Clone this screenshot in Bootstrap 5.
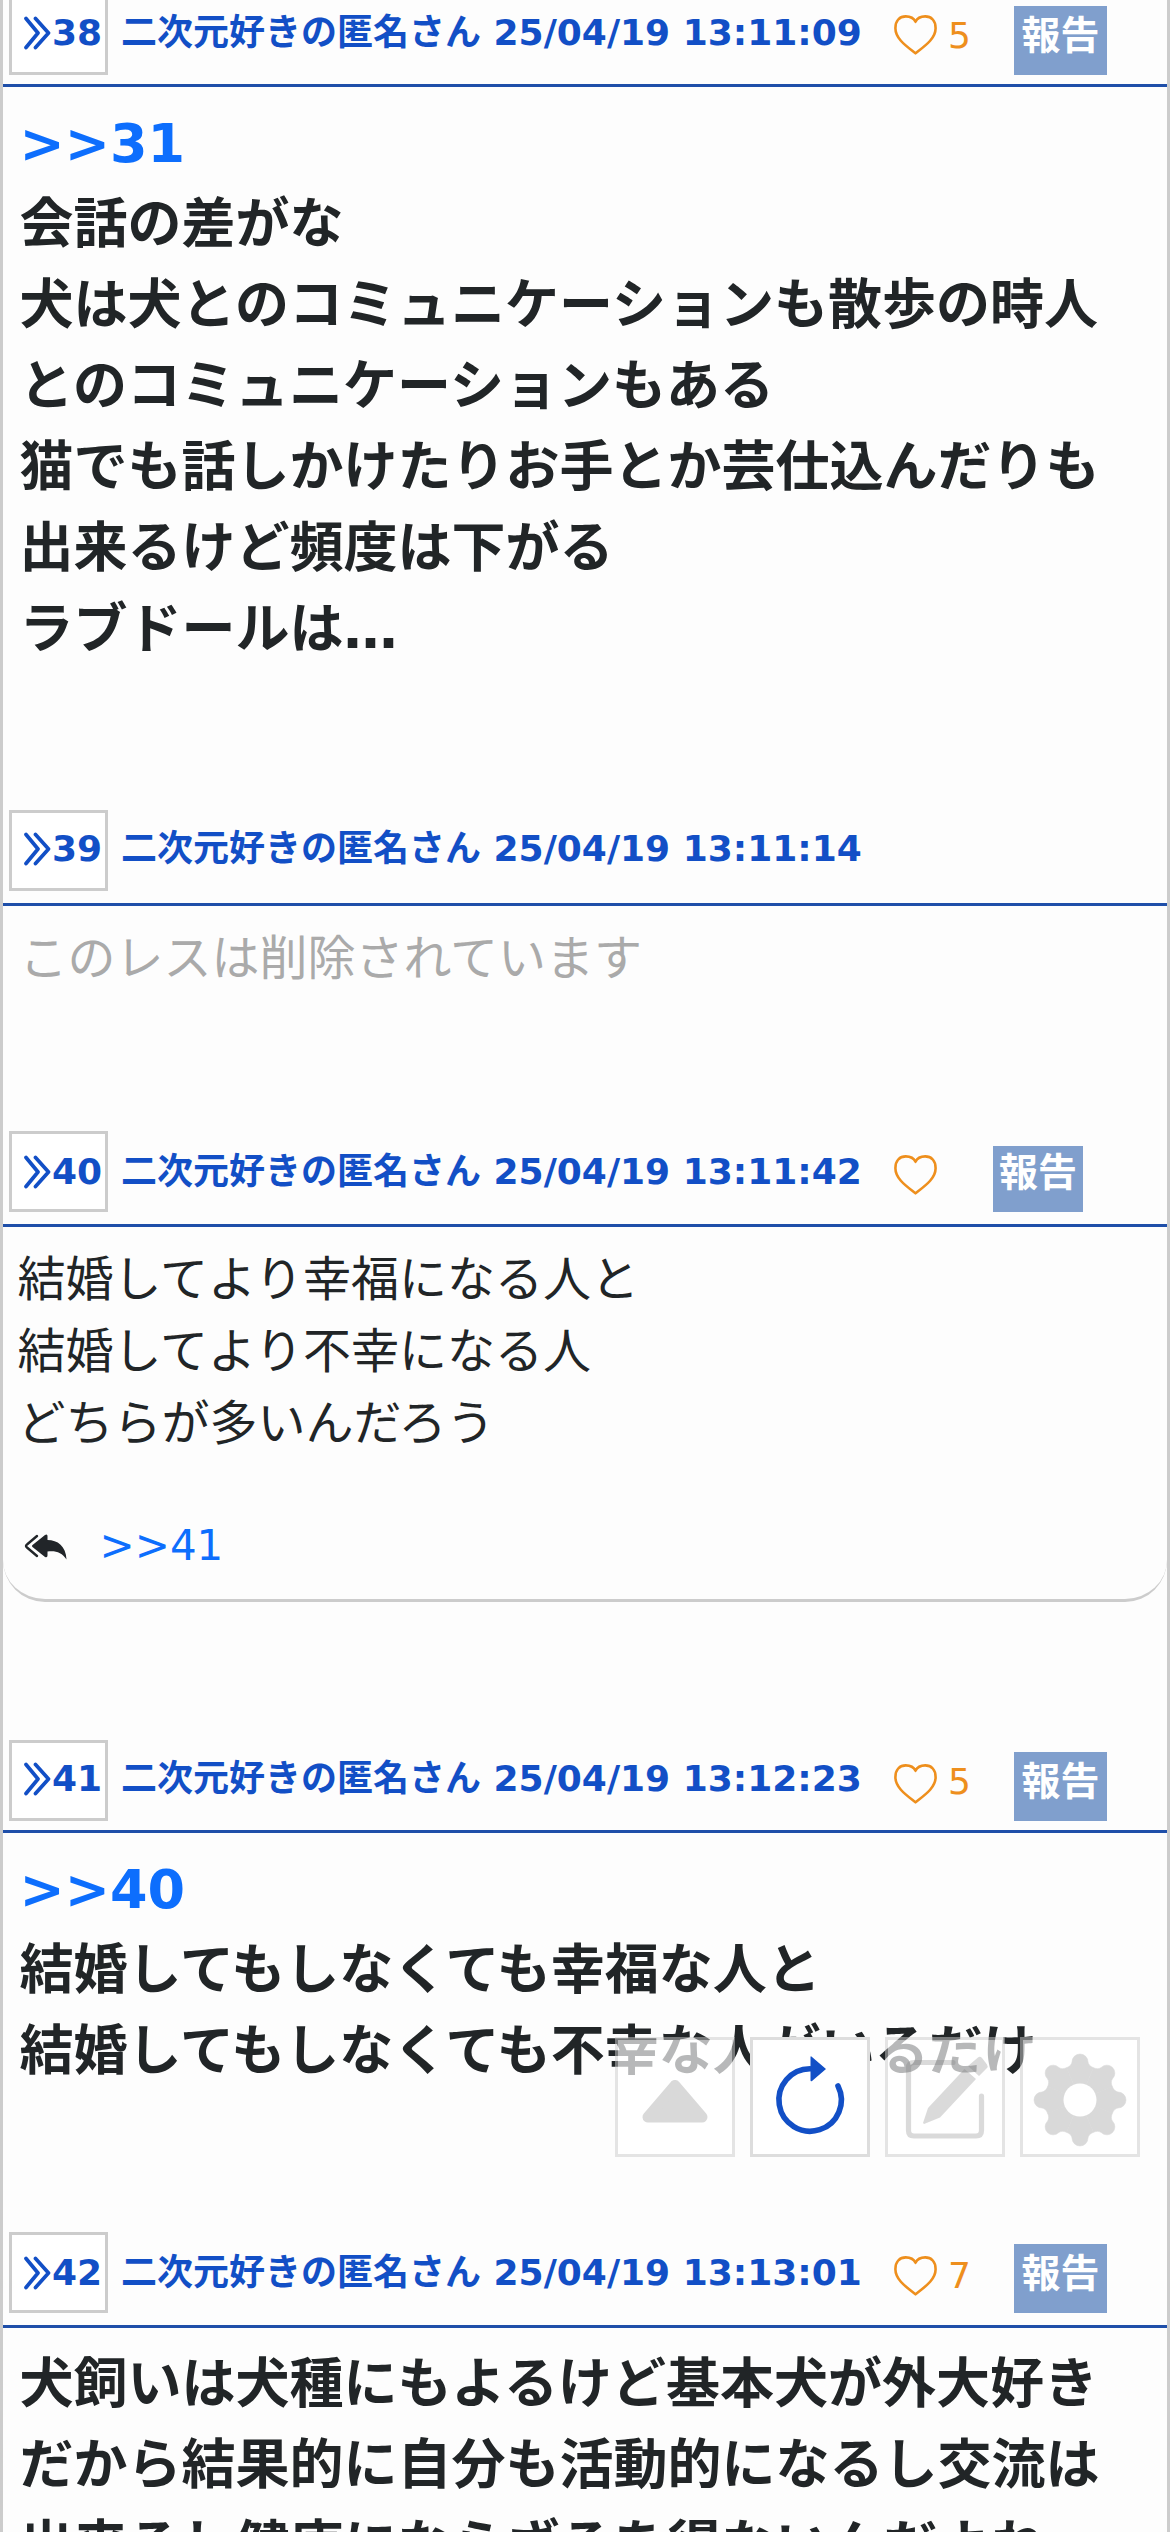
<!DOCTYPE html>
<html lang="ja">
<head>
<meta charset="utf-8">
<meta name="viewport" content="width=device-width, initial-scale=1">
<title>二次元好きの匿名さん</title>
<link href="https://cdn.jsdelivr.net/npm/bootstrap@5.3.0/dist/css/bootstrap.min.css" rel="stylesheet">
<style>
  html, body { height: 2532px; overflow: hidden; }
  body { background: #fdfdfd; color: #212527; font-family: "DejaVu Sans", "Noto Sans CJK JP", sans-serif; }
  .thread { height: 2532px; overflow: hidden; border-left: 3px solid #ccc; border-right: 3px solid #ccc; }
  .res-head { height: 96px; padding-left: 6px; border-bottom: 3px solid #1f4fa9; color: #124fc6; font-size: 36px; line-height: 54px; white-space: nowrap; }
  .res-head.tight { height: 93px; }
  .res-head.first { margin-top: -6px; }
  .res-head > * { flex-shrink: 0; }
  .num-box { width: 99px; height: 81px; padding-left: 12px; border: 3px solid #ccc; background: #fff; }
  .num-box.drop { padding-top: 2px; }
  .num-box svg { width: 28px; height: 54px; margin-top: 9px; }
  .num-box span { margin-top: 9px; }
  .who { width: 773px; margin: 12px 0 0 13px; }
  .who.drop { margin-top: 14px; }
  .fav { color: #ee8f1d; margin-top: 15px; }
  .fav.drop { margin-top: 17px; }
  .heart { width: 43px; height: 40px; margin-top: 9px; }
  .first .heart { margin-top: 6px; }
  .drop .heart { margin-top: 7px; }
  .fav span { width: 23px; margin-left: 11px; }
  .report { width: 93px; height: 69px; margin: 12px 0 0 43px; padding-top: 1px; background: #809fcd; color: #fff; font-size: 39px; line-height: 58px; }
  .report.small-box { width: 90px; height: 66px; margin: 15px 0 0 22px; padding-top: 0; line-height: 54px; }
  .res-body { padding: 16px 16.5px 0; font-size: 54px; line-height: 81px; font-weight: 700; white-space: nowrap; }
  .res-body.plain { font-size: 48px; line-height: 72px; font-weight: 400; }
  .h-38 { height: 723px; }
  .h-39 { height: 225px; color: #aaa; }
  .h-40 { height: 375px; margin-bottom: 138px; padding-left: 14.5px !important; border-bottom: 3px solid #ccc; border-radius: 0 0 42px 42px; }
  .h-41 { height: 399px; }
  .h-42 { height: 260px; }
  .anchor { color: #0d6efd; text-decoration: none; }
  .replies { margin-top: 55px; font-size: 42px; line-height: 63px; padding-left: 6px; }
  .replies svg { width: 43px; height: 26px; margin-top: 3px; margin-right: 33px; }
  .tools { position: fixed; right: 30px; top: 2037px; gap: 15px; }
  .tool { width: 120px; height: 120px; padding: 0; border: 3px solid #ddd; border-radius: 0; background: #fff; color: #124fc6; line-height: 0; }
  .tool.off { background: rgba(255,255,255,.68); background-clip: padding-box; border-color: rgba(204,204,204,.5); color: rgba(120,120,120,.27); }
  .tool svg { width: 114px; height: 114px; }
</style>
</head>
<body>
<svg class="d-none" xmlns="http://www.w3.org/2000/svg">
  <symbol id="chev" viewBox="0 0 28 54"><path d="M2 12.500 14 27 2 41.500M11.500 12.500 24.500 27 11.500 41.500" fill="none" stroke="currentColor" stroke-width="3.700" stroke-linecap="round" stroke-linejoin="round"/></symbol>
  <symbol id="heart" viewBox="0 0 43 40"><path d="M21.500 38.300C13 31.500 1.400 24 1.400 13.200 1.400 5.200 6 1.400 11.800 1.400c4.500 0 8.200 2.200 9.700 5.400 1.500-3.200 5.200-5.400 9.700-5.400 5.800 0 10.400 3.800 10.400 11.800C41.600 24 30 31.500 21.500 38.300Z" fill="none" stroke="currentColor" stroke-width="2.600" stroke-linejoin="round"/></symbol>
</svg>

<main class="thread">
  <article>
    <header class="res-head tight first d-flex align-items-start fw-bold">
      <div class="num-box d-flex"><svg><use href="#chev"/></svg><span>38</span></div>
      <div class="who">二次元好きの匿名さん 25/04/19 13:11:09</div>
      <div class="fav d-flex fw-normal"><svg class="heart"><use href="#heart"/></svg><span>5</span></div>
      <div class="report text-center">報告</div>
    </header>
    <div class="res-body h-38"><a class="anchor" href="#">&gt;&gt;31</a><br>会話の差がな<br>犬は犬とのコミュニケーションも散歩の時人<br>とのコミュニケーションもある<br>猫でも話しかけたりお手とか芸仕込んだりも<br>出来るけど頻度は下がる<br>ラブドールは…</div>
  </article>

  <article>
    <header class="res-head d-flex align-items-start fw-bold">
      <div class="num-box d-flex"><svg><use href="#chev"/></svg><span>39</span></div>
      <div class="who">二次元好きの匿名さん 25/04/19 13:11:14</div>
    </header>
    <div class="res-body plain h-39">このレスは削除されています</div>
  </article>

  <article>
    <header class="res-head d-flex align-items-start fw-bold">
      <div class="num-box drop d-flex"><svg><use href="#chev"/></svg><span>40</span></div>
      <div class="who drop">二次元好きの匿名さん 25/04/19 13:11:42</div>
      <div class="fav drop d-flex fw-normal"><svg class="heart"><use href="#heart"/></svg><span></span></div>
      <div class="report small-box text-center">報告</div>
    </header>
    <div class="res-body plain h-40">結婚してより幸福になる人と<br>結婚してより不幸になる人<br>どちらが多いんだろう
      <div class="replies d-flex align-items-center">
        <svg viewBox="0 0 43 26"><path d="M13 2 3 10.500Q1 12 3 13.500L13 22" fill="none" stroke="#212529" stroke-width="2.400" stroke-linecap="round"/><path d="M8.500 11Q7.500 12 8.500 13L21 23Q23.500 24 23.500 21.500V17.500C32 16.500 38 18.500 42.500 25.500 42 12 33.500 6 23.500 6V2Q23.500-.5 21 1Z" fill="#212529"/></svg>
        <a class="anchor" href="#">&gt;&gt;41</a>
      </div>
    </div>
  </article>

  <article>
    <header class="res-head tight d-flex align-items-start fw-bold">
      <div class="num-box d-flex"><svg><use href="#chev"/></svg><span>41</span></div>
      <div class="who">二次元好きの匿名さん 25/04/19 13:12:23</div>
      <div class="fav d-flex fw-normal"><svg class="heart"><use href="#heart"/></svg><span>5</span></div>
      <div class="report text-center">報告</div>
    </header>
    <div class="res-body h-41"><a class="anchor" href="#">&gt;&gt;40</a><br>結婚してもしなくても幸福な人と<br>結婚してもしなくても不幸な人がいるだけ</div>
  </article>

  <article>
    <header class="res-head d-flex align-items-start fw-bold">
      <div class="num-box drop d-flex"><svg><use href="#chev"/></svg><span>42</span></div>
      <div class="who drop">二次元好きの匿名さん 25/04/19 13:13:01</div>
      <div class="fav drop d-flex fw-normal"><svg class="heart"><use href="#heart"/></svg><span>7</span></div>
      <div class="report text-center">報告</div>
    </header>
    <div class="res-body h-42">犬飼いは犬種にもよるけど基本犬が外大好き<br>だから結果的に自分も活動的になるし交流は<br>出来るし健康にならざるを得ないんだよね</div>
  </article>
</main>

<nav class="tools d-flex">
  <button class="tool off" type="button" aria-label="上へ"><svg viewBox="3 3 114 114"><path d="M60 48.500 33 80H87Z" fill="#d9d9d9" stroke="#d9d9d9" stroke-width="11" stroke-linejoin="round"/></svg></button>
  <button class="tool" type="button" aria-label="更新"><svg viewBox="3 3 114 114"><path d="M88 49A31.200 31.200 0 1 1 60 31.800" fill="none" stroke="currentColor" stroke-width="5.600" stroke-linecap="round"/><path d="M60.500 20.500Q60.500 18.500 62 20L76 32 62 44Q60.500 45 60.500 43Z" fill="currentColor"/></svg></button>
  <button class="tool off" type="button" aria-label="書く"><svg viewBox="3 3 114 114"><path d="M68 25.500H29Q23.500 25.500 23.500 31V93.500Q23.500 99 29 99H91Q96.500 99 96.500 93.500V59" fill="none" stroke="currentColor" stroke-width="5.200" stroke-linecap="round"/><path d="M38 86 43 71 79.500 32 91 42 55 80.500 39 87ZM83 29 93 20.500Q95 19 97 21L102 27.500Q103.500 29.500 101.500 31.500L94 39Z" fill="currentColor"/></svg></button>
  <button class="tool off" type="button" aria-label="設定"><svg viewBox="-57 -60 114 114"><g fill="#d9d9d9" stroke="#d9d9d9" stroke-width=".5"><path id="tooth" d="M0 0-13.400-32.300C-9.800-33.800-8.500-35.500-8-38A8 8 0 0 1 8-38C8.500-35.500 9.800-33.800 13.400-32.300Z"/><use href="#tooth" transform="rotate(45)"/><use href="#tooth" transform="rotate(90)"/><use href="#tooth" transform="rotate(135)"/><use href="#tooth" transform="rotate(180)"/><use href="#tooth" transform="rotate(225)"/><use href="#tooth" transform="rotate(270)"/><use href="#tooth" transform="rotate(315)"/></g><circle r="16.500" fill="#fff"/></svg></button>
</nav>
<script src="https://cdn.jsdelivr.net/npm/bootstrap@5.3.0/dist/js/bootstrap.bundle.min.js"></script>
</body>
</html>
